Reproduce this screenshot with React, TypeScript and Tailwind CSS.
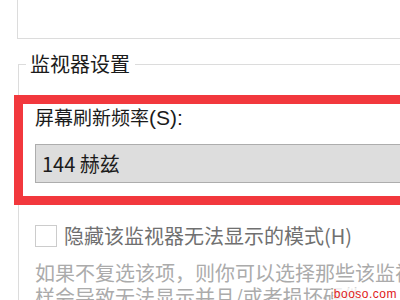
import React from "react";

export default function App() {
  const font = { fontFamily: '"Noto Sans CJK SC", "Noto Sans", sans-serif' };
  return (
    <div
      className="relative w-[400px] h-[300px] overflow-hidden bg-white"
      style={font}
    >
      {/* top box (previous group) */}
      <div className="ml-[17px] w-[420px] h-[39px] border-l border-b border-[#dcdcdc]" />

      {/* monitor settings group */}
      <fieldset className="mt-[15px] ml-[18px] w-[420px] border-l border-t border-[#dcdcdc] pl-[16px] pt-[31px]">
        <legend className="-ml-[9px] pl-[4px] pr-[5px] text-[20px] leading-[20px] text-[#1b1b1b]">
          监视器设置
        </legend>
        <div className="text-[19px] leading-[24px] text-[#1b1b1b] whitespace-nowrap">
          屏幕刷新频率
          <span
            className="text-[21px]"
            style={{ fontFamily: '"Liberation Sans", sans-serif' }}
          >
            (S):
          </span>
        </div>
        <div className="mt-[14px] flex h-[39px] w-[400px] items-center border border-[#adadad] bg-[#dddddd] pl-[6px] text-[20px] text-[#1b1b1b] whitespace-nowrap">
          144&nbsp;赫兹
        </div>
        <div className="mt-[41px] flex items-center gap-[7px]">
          <div className="h-[22px] w-[22px] border border-[#cccccc] bg-white" />
          <span className="text-[20px] leading-[24px] text-[#707070] whitespace-nowrap">
            隐藏该监视器无法显示的模式(H)
          </span>
        </div>
        <div className="mt-[13px] text-[20px] leading-[24px] text-[#ababab] whitespace-nowrap">
          <div>如果不复选该项，则你可以选择那些该监视器</div>
          <div>样会导致无法显示并且/或者损坏硬件。</div>
        </div>
      </fieldset>

      {/* red annotation rectangle */}
      <div className="absolute left-[14px] top-[95px] h-[110px] w-[420px] border-[9px] border-[#f2383d]" />

      {/* watermark */}
      <div
        className="absolute right-[2px] top-[288px] bg-white/80 px-[1px] text-[12px] leading-[12px] tracking-[0.5px] text-[#e02020]"
        style={{ fontFamily: '"Liberation Sans", sans-serif' }}
      >
        booso.com
      </div>
    </div>
  );
}
